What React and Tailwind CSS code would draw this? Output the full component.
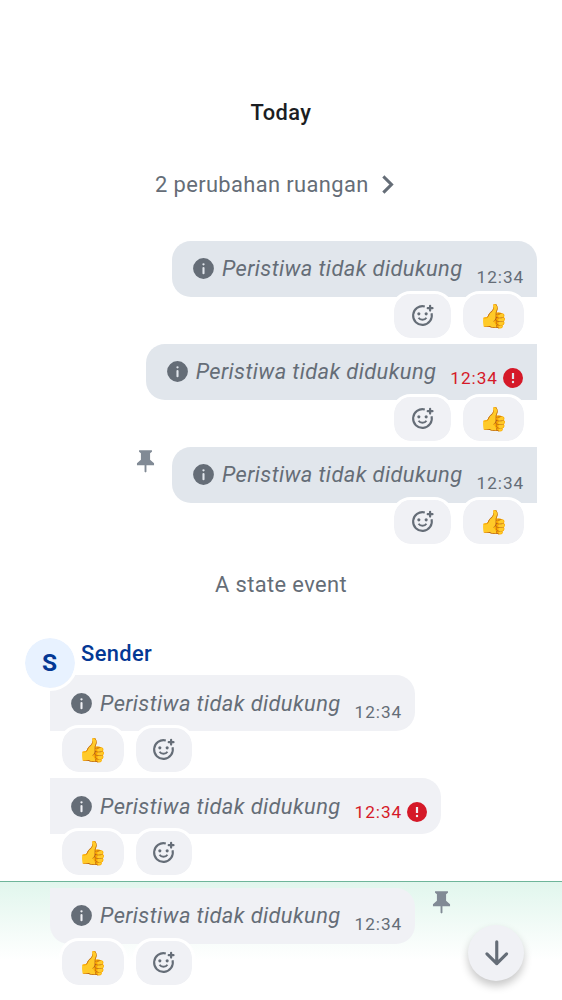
import React from "react";

function InfoIcon() {
  return (
    <svg viewBox="0 0 24 24" className="size-[25px] shrink-0 fill-[#656d77]">
      <path fillRule="evenodd" d="M12 2a10 10 0 1 0 0 20 10 10 0 0 0 0-20Zm-1 9.5a1 1 0 0 1 2 0v5a1 1 0 0 1-2 0v-5ZM12 6.9a1.1 1.1 0 1 1 0 2.2 1.1 1.1 0 0 1 0-2.2Z" />
    </svg>
  );
}

function ErrorIcon() {
  return (
    <svg viewBox="0 0 24 24" className="ml-[3px] size-[24px] shrink-0 fill-[#d51928]">
      <path fillRule="evenodd" d="M12 2a10 10 0 1 0 0 20 10 10 0 0 0 0-20Zm-1.1 5h2.2v6h-2.2V7Zm1.1 7.8a1.2 1.2 0 1 1 0 2.4 1.2 1.2 0 0 1 0-2.4Z" />
    </svg>
  );
}

function PinIcon() {
  return (
    <svg viewBox="0 0 24 24" className="size-[25px] shrink-0 fill-[#818a95]">
      <path d="M5.8 2.1h12.4v1.4L16.4 5v6.3l3.8 3.4v1.9h-7.3v6.2L12 23.6l-.9-.8v-6.2H3.8v-1.9l3.8-3.4V5L5.8 3.5V2.1Z" />
    </svg>
  );
}

function ReactIcon() {
  return (
    <svg viewBox="0 0 24 24" className="size-[25px] fill-none stroke-[#656d77]">
      <path d="M14.2 3.3A9 9 0 1 0 20.7 9.8" strokeWidth="2" />
      <path d="M8.2 14.2c1.7 2.5 5.9 2.5 7.6 0" strokeWidth="1.9" />
      <path d="M19.3 2.7v4.6M17 5h4.6" strokeWidth="2.1" strokeLinecap="round" />
      <circle cx="8.5" cy="10.4" r="1.5" className="fill-[#656d77] stroke-none" />
      <circle cx="15.5" cy="10.4" r="1.5" className="fill-[#656d77] stroke-none" />
    </svg>
  );
}

function Reactions({ mine }) {
  const add = (
    <div key="add" className="box-content flex h-[43.5px] w-[56.5px] items-center justify-center rounded-[20px] border-[3px] border-white bg-[#f0f1f5] bg-clip-padding">
      <ReactIcon />
    </div>
  );
  const thumb = (
    <div key="thumb" className="box-content flex h-[43.5px] w-[61.5px] items-center justify-center rounded-[20px] border-[3px] border-white bg-[#f0f1f5] bg-clip-padding">
      <span className={`pt-px text-[23.4px] leading-[43px] ${mine ? "" : "pr-px"}`}>👍</span>
    </div>
  );
  return (
    <div className={`relative -mt-[6px] flex gap-[6px] ${mine ? "mr-[9.8px] justify-end" : "ml-[9.2px]"}`}>
      {mine ? [add, thumb] : [thumb, add]}
    </div>
  );
}

function Message({ mine, failed, pinned, low, shape }) {
  return (
    <div className="h-[103px]">
      <div className={`flex ${mine ? "justify-end" : ""}`}>
        {pinned && mine && <div className="mr-[14px] pt-px"><PinIcon /></div>}
        <div className={`flex h-[56px] items-start pl-[19px] ${failed ? "pr-[12px]" : "pr-[12.8px]"} ${shape} ${mine ? "bg-[#e1e6ec]" : "bg-[#f0f1f5]"}`}>
          <div className={`flex items-center ${low ? "h-[56px]" : "h-[55px]"}`}>
            <InfoIcon />
            <span className="ml-[6px] text-[21.875px] tracking-[0.39px] text-[#656d77] italic">Peristiwa tidak didukung</span>
          </div>
          <div className={`ml-[14px] flex items-center text-[17.2px] leading-[24px] tracking-[0.98px] ${failed ? "mt-[22px] text-[#d51928]" : low ? "mt-[25px] text-[#656d77]" : "mt-[24px] text-[#656d77]"}`}>
            12:34
            {failed && <ErrorIcon />}
          </div>
        </div>
        {pinned && !mine && <div className="ml-[14px] pt-px"><PinIcon /></div>}
      </div>
      <Reactions mine={mine} />
    </div>
  );
}

export default function App() {
  return (
    <main className="relative h-[1000px] w-[562px] overflow-hidden bg-white font-['Roboto',sans-serif] text-[21.875px] leading-[31px] text-[#656d77]">
      <h2 className="pt-[97px] text-center font-medium tracking-[0.39px] text-[#1b1d22]">Today</h2>
      <div className="mt-[41px] flex items-center pl-[155px] tracking-[0.39px]">
        <span>2 perubahan ruangan</span>
        <svg viewBox="0 0 24 24" className="ml-[6px] size-[25px] fill-none stroke-[#656d77]">
          <path d="m9.1 5.3 6.7 6.7-6.7 6.7" strokeWidth="3" strokeLinecap="square" />
        </svg>
      </div>
      <section className="mt-[41px] pr-[25px]">
        <Message mine shape="rounded-l-[19px] rounded-tr-[19px]" />
        <Message mine failed shape="rounded-l-[19px]" />
        <Message mine pinned shape="rounded-l-[19px]" />
      </section>
      <p className="mt-[19px] text-center tracking-[0.39px]">A state event</p>
      <section className="mt-[38px]">
        <header className="relative z-10 flex h-[37px] pl-[21.5px] text-[#043894]">
          <div className="-mt-[3.5px] box-content flex size-[50px] shrink-0 items-center justify-center rounded-full border-[3.5px] border-white bg-[#e8f2ff] bg-clip-padding text-[24.5px] font-bold">S</div>
          <span className="ml-[3.5px] font-medium tracking-[0.39px]">Sender</span>
        </header>
        <div className="pl-[50px]">
          <Message low shape="rounded-r-[19px]" />
          <Message failed low shape="rounded-r-[19px]" />
        </div>
        <div className="h-[119px] border-t border-[#6eb59a] bg-linear-to-b from-[#e1f6ed] to-white to-[78px] pt-[6px] pl-[50px]">
          <Message pinned shape="rounded-r-[19px] rounded-bl-[19px]" />
        </div>
      </section>
      <button className="absolute top-[925px] left-[468.3px] flex size-[56px] items-center justify-center rounded-full bg-[#f0f1f5] shadow-[0_5px_8px_rgba(0,0,0,0.22)]">
        <svg viewBox="0 0 24 24" className="size-[37.5px] fill-none stroke-[#656d77]">
          <path d="M12 5v14M5.7 12.7 12 19l6.3-6.3" strokeWidth="2" strokeLinecap="round" strokeLinejoin="round" />
        </svg>
      </button>
    </main>
  );
}
